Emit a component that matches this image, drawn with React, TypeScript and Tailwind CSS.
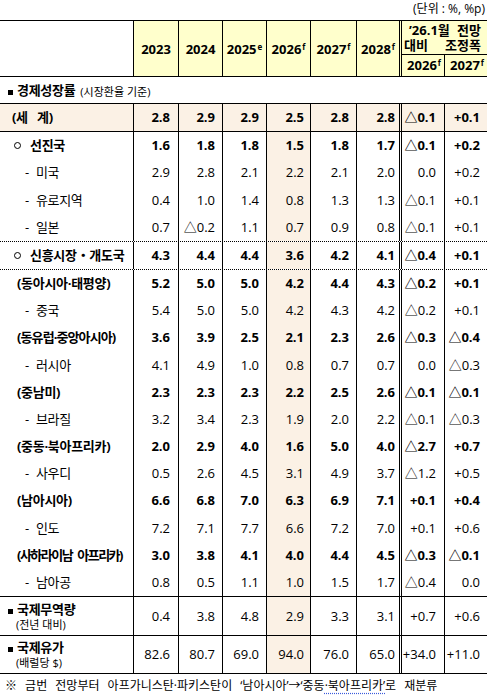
import React from "react";

type Kind = "world" | "major" | "sub" | "region";
interface RowData {
  label: React.ReactNode;
  key: string;
  kind: Kind;
  vals: string[];
  tight?: string;
}

const NUM_CELLS = [
  "w-[45px] pr-[8px] border-r",
  "w-[44px] pr-[7px] border-r",
  "w-[44px] pr-[7px] border-r",
  "w-[44px] pr-[6px] border-r bg-[#fbf1e5]",
  "w-[46px] pr-[7px] border-r",
  "w-[42px] pr-[4px]",
  "w-[46px] pr-[8px] border-l-[3px] border-double border-r",
  "w-[42px] pr-[7px]",
];

const groupA: RowData[] = [
  { key: "a1", label: "선진국", kind: "major", vals: ["1.6", "1.8", "1.8", "1.5", "1.8", "1.7", "△0.1", "+0.2"] },
  { key: "a2", label: "미국", kind: "sub", vals: ["2.9", "2.8", "2.1", "2.2", "2.1", "2.0", "0.0", "+0.2"] },
  { key: "a3", label: "유로지역", kind: "sub", vals: ["0.4", "1.0", "1.4", "0.8", "1.3", "1.3", "△0.1", "+0.1"] },
  { key: "a4", label: "일본", kind: "sub", vals: ["0.7", "△0.2", "1.1", "0.7", "0.9", "0.8", "△0.1", "+0.1"] },
];

const groupB: RowData[] = [
  { key: "b1", label: "(동아시아·태평양)", kind: "region", vals: ["5.2", "5.0", "5.0", "4.2", "4.4", "4.3", "△0.2", "+0.1"] },
  { key: "b2", label: "중국", kind: "sub", vals: ["5.4", "5.0", "5.0", "4.2", "4.3", "4.2", "△0.2", "+0.1"] },
  { key: "b3", label: "(동유럽·중앙아시아)", kind: "region", vals: ["3.6", "3.9", "2.5", "2.1", "2.3", "2.6", "△0.3", "△0.4"], tight: "tracking-[-0.9px]" },
  { key: "b4", label: "러시아", kind: "sub", vals: ["4.1", "4.9", "1.0", "0.8", "0.7", "0.7", "0.0", "△0.3"] },
  { key: "b5", label: "(중남미)", kind: "region", vals: ["2.3", "2.3", "2.3", "2.2", "2.5", "2.6", "△0.1", "△0.1"] },
  { key: "b6", label: "브라질", kind: "sub", vals: ["3.2", "3.4", "2.3", "1.9", "2.0", "2.2", "△0.1", "△0.3"] },
  { key: "b7", label: "(중동·북아프리카)", kind: "region", vals: ["2.0", "2.9", "4.0", "1.6", "5.0", "4.0", "△2.7", "+0.7"] },
  { key: "b8", label: "사우디", kind: "sub", vals: ["0.5", "2.6", "4.5", "3.1", "4.9", "3.7", "△1.2", "+0.5"] },
  { key: "b9", label: "(남아시아)", kind: "region", vals: ["6.6", "6.8", "7.0", "6.3", "6.9", "7.1", "+0.1", "+0.4"] },
  { key: "b10", label: "인도", kind: "sub", vals: ["7.2", "7.1", "7.7", "6.6", "7.2", "7.0", "+0.1", "+0.6"] },
  {
    key: "b11",
    label: (
      <>
        (사하라이남<span className="inline-block w-[5px]" />아프리카)
      </>
    ),
    kind: "region",
    vals: ["3.0", "3.8", "4.1", "4.0", "4.4", "4.5", "△0.3", "△0.1"],
    tight: "tracking-[-1.5px]",
  },
  { key: "b12", label: "남아공", kind: "sub", vals: ["0.8", "0.5", "1.1", "1.0", "1.5", "1.7", "△0.4", "0.0"] },
];

function Label({ row }: { row: RowData }) {
  if (row.kind === "world") {
    return <span className="pl-[12px] font-bold whitespace-pre">(세   계)</span>;
  }
  if (row.kind === "major") {
    return (
      <span className="flex items-center pl-[14px]">
        <span className="inline-block w-[7px] h-[7px] rounded-full border border-black" />
        <span className="ml-[9px] font-bold">{row.label}</span>
      </span>
    );
  }
  if (row.kind === "sub") {
    return (
      <span className="flex items-center pl-[25px]">
        <span>-</span>
        <span className="ml-[7px]">{row.label}</span>
      </span>
    );
  }
  return <span className={`pl-[17px] font-bold whitespace-nowrap ${row.tight ?? ""}`}>{row.label}</span>;
}

function Cells({ vals, bold }: { vals: string[]; bold: boolean }) {
  return (
    <>
      {vals.map((v, i) => (
        <div
          key={i}
          className={`flex items-center justify-end border-black h-full whitespace-nowrap ${NUM_CELLS[i]} ${bold ? "font-bold" : ""}`}
        >
          {v}
        </div>
      ))}
    </>
  );
}

function DataRow({ row, className }: { row: RowData; className: string }) {
  const bold = row.kind !== "sub";
  return (
    <div className={`flex ${className}`}>
      <div className="w-[134px] h-full border-r border-black flex items-center tracking-[-0.3px]">
        <Label row={row} />
      </div>
      <Cells vals={row.vals} bold={bold} />
    </div>
  );
}

function Square() {
  return <span className="inline-block w-[5px] h-[5px] bg-black mt-[5px] mr-[4px]" />;
}

export default function App() {
  const world: RowData = {
    key: "w",
    label: "(세 계)",
    kind: "world",
    vals: ["2.8", "2.9", "2.9", "2.5", "2.8", "2.8", "△0.1", "+0.1"],
  };
  const emerging: RowData = {
    key: "e",
    label: "신흥시장・개도국",
    kind: "major",
    vals: ["4.3", "4.4", "4.4", "3.6", "4.2", "4.1", "△0.4", "+0.1"],
  };
  const trade = ["0.4", "3.8", "4.8", "2.9", "3.3", "3.1", "+0.7", "+0.6"];
  const oil = ["82.6", "80.7", "69.0", "94.0", "76.0", "65.0", "+34.0", "+11.0"];

  const years: { y: string; s?: string; cls: string }[] = [
    { y: "2023", cls: "w-[45px] border-r" },
    { y: "2024", cls: "w-[44px] border-r" },
    { y: "2025", s: "e", cls: "w-[44px] border-r" },
    { y: "2026", s: "f", cls: "w-[44px] border-r" },
    { y: "2027", s: "f", cls: "w-[46px] border-r" },
    { y: "2028", s: "f", cls: "w-[42px]" },
  ];

  return (
    <div
      className="w-[493px] h-[697px] bg-white text-black text-[13px] leading-[15px]"
      style={{ fontFamily: '"Open Sans", "Noto Sans CJK KR", sans-serif' }}
    >
      <div className="w-[487px]">
        {/* unit */}
        <div className="h-[20px] flex items-center justify-end pr-[2px] text-[12px] pb-[3px]">(단위 : %, %p)</div>

        {/* header */}
        <div className="flex h-[57px] border-y border-black font-bold">
          <div className="w-[134px] h-full border-r border-black bg-white" />
          {years.map((c) => (
            <div
              key={c.y}
              className={`h-full flex items-center justify-center bg-[#ffffcc] border-black pt-[2px] ${c.cls}`}
            >
              <span>
                {c.y}
                {c.s && <sup className="text-[8px] ml-[1px]">{c.s}</sup>}
              </span>
            </div>
          ))}
          <div className="w-[88px] h-full flex flex-col bg-[#ffffcc] border-l-[3px] border-double border-black">
            <div className="h-[34px] border-b border-black flex flex-col justify-center whitespace-nowrap">
              <div className="h-[15px] leading-[15px] flex items-center justify-between pl-[7px] pr-[6px]">
                <span>’26.1월</span>
                <span>전망</span>
              </div>
              <div className="h-[15px] leading-[15px] flex items-center justify-between pl-[2px] pr-[6px]">
                <span>대비</span>
                <span>조정폭</span>
              </div>
            </div>
            <div className="flex flex-1">
              <div className="w-[43px] h-full border-r border-black flex items-center justify-center pl-[2px]">
                <span>
                  2026<sup className="text-[8px] ml-[1px]">f</sup>
                </span>
              </div>
              <div className="w-[42px] h-full flex items-center justify-center pl-[2px]">
                <span>
                  2027<sup className="text-[8px] ml-[1px]">f</sup>
                </span>
              </div>
            </div>
          </div>
        </div>

        {/* section title */}
        <div className="h-[26px] flex items-center pl-[8px]">
          <Square />
          <span className="font-bold tracking-[-0.3px]">경제성장률</span>
          <span className="text-[11px] ml-[5px] mt-[2px]">(시장환율 기준)</span>
        </div>

        {/* world */}
        <DataRow row={world} className="h-[29px] border-y border-black bg-[#fbf1e5]" />

        {/* advanced */}
        <div className="h-[109px] flex flex-col">
          {groupA.map((r) => (
            <DataRow key={r.key} row={r} className="flex-1" />
          ))}
        </div>

        {/* emerging */}
        <DataRow row={emerging} className="h-[29px] border-y border-dotted border-black" />

        {/* regions */}
        <div className="h-[326px] flex flex-col">
          {groupB.map((r) => (
            <DataRow key={r.key} row={r} className="flex-1" />
          ))}
        </div>

        {/* trade */}
        <div className="flex h-[39px] border-t border-black">
          <div className="w-[134px] h-full border-r border-black flex flex-col justify-center pt-[1px]">
            <div className="flex items-center pl-[8px]">
              <Square />
              <span className="font-bold tracking-[-0.3px]">국제무역량</span>
            </div>
            <div className="pl-[16px] text-[11px] leading-[15px]">(전년 대비)</div>
          </div>
          <Cells vals={trade} bold={false} />
        </div>

        {/* oil */}
        <div className="flex h-[39px] border-y border-black">
          <div className="w-[134px] h-full border-r border-black flex flex-col justify-center">
            <div className="flex items-center pl-[8px]">
              <Square />
              <span className="font-bold tracking-[-0.3px]">국제유가</span>
            </div>
            <div className="pl-[16px] text-[11px] leading-[15px]">(배럴당 $)</div>
          </div>
          <Cells vals={oil} bold={false} />
        </div>

        {/* footnote */}
        <div className="h-[23px] flex items-center pl-[5px] text-[12px] whitespace-pre [word-spacing:5px]">
          ※ 금번 전망부터 아프가니스탄·파키스탄이 ‘남아시아’→‘중동
          <span className="underline decoration-dotted decoration-[#3b5bdb] underline-offset-[3px]">·북아프리카’</span>
          로 재분류
        </div>
      </div>
    </div>
  );
}
